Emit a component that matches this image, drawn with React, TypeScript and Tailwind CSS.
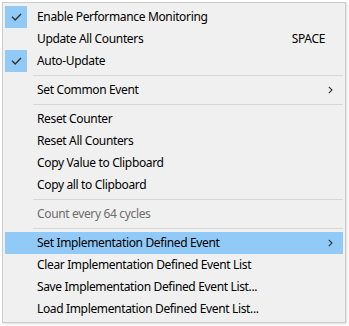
import React from 'react';

type Item =
    | { kind: 'sep' }
    | { kind: 'item'; label: string; checked?: boolean; shortcut?: string; submenu?: boolean; disabled?: boolean; active?: boolean };

const items: Item[] = [
    { kind: 'item', label: 'Enable Performance Monitoring', checked: true },
    { kind: 'item', label: 'Update All Counters', shortcut: 'SPACE' },
    { kind: 'item', label: 'Auto-Update', checked: true },
    { kind: 'sep' },
    { kind: 'item', label: 'Set Common Event', submenu: true },
    { kind: 'sep' },
    { kind: 'item', label: 'Reset Counter' },
    { kind: 'item', label: 'Reset All Counters' },
    { kind: 'item', label: 'Copy Value to Clipboard' },
    { kind: 'item', label: 'Copy all to Clipboard' },
    { kind: 'sep' },
    { kind: 'item', label: 'Count every 64 cycles', disabled: true },
    { kind: 'sep' },
    { kind: 'item', label: 'Set Implementation Defined Event', submenu: true, active: true },
    { kind: 'item', label: 'Clear Implementation Defined Event List' },
    { kind: 'item', label: 'Save Implementation Defined Event List...' },
    { kind: 'item', label: 'Load Implementation Defined Event List...' },
];

const Check = () => (
    <svg width="11" height="8" viewBox="0 0 11 8" fill="none">
        <path d="M1 3.8l3.2 3.2 5.8-6" stroke="#333333" strokeWidth="1.4" />
    </svg>
);

const Chevron = () => (
    <svg width="5" height="8" viewBox="0 0 5 8" fill="none">
        <path d="M0.8 0.8l3.2 3.2-3.2 3.2" stroke="#333333" strokeWidth="1.1" />
    </svg>
);

export default function App() {
    return (
        <div className="w-[349px] h-[326px] bg-white p-[2px]" style={{ fontFamily: '"Noto Sans", "Open Sans", sans-serif' }}>
            <div className="w-[344px] border border-[#cccccc] bg-[#f0f0f0] pt-[3px] pb-[2px] px-[2px] flex flex-col shadow-[1px_1px_2px_rgba(0,0,0,0.15)]">
                {items.map((it, i) => {
                    if (it.kind === 'sep') {
                        return (
                            <div key={i} className="h-[7px] flex items-center pl-[28px]">
                                <div className="h-px w-full bg-[#d7d7d7]" />
                            </div>
                        );
                    }
                    return (
                        <div
                            key={i}
                            className={`h-[22px] flex items-center text-[12px] tracking-[-0.35px] ${it.active ? 'bg-[#91c9f7]' : ''} ${it.disabled ? 'text-[#6d6d6d]' : 'text-black'}`}
                        >
                            <div className={`w-[22px] h-[22px] flex items-center justify-center ${it.checked ? 'bg-[#91c9f7]' : ''}`}>
                                {it.checked && <Check />}
                            </div>
                            <span className="pl-[10px] flex-1 whitespace-nowrap">{it.label}</span>
                            {it.shortcut && <span className="pr-[18px]">{it.shortcut}</span>}
                            {it.submenu && (
                                <span className="pr-[10px] flex items-center">
                                    <Chevron />
                                </span>
                            )}
                        </div>
                    );
                })}
            </div>
        </div>
    );
}
